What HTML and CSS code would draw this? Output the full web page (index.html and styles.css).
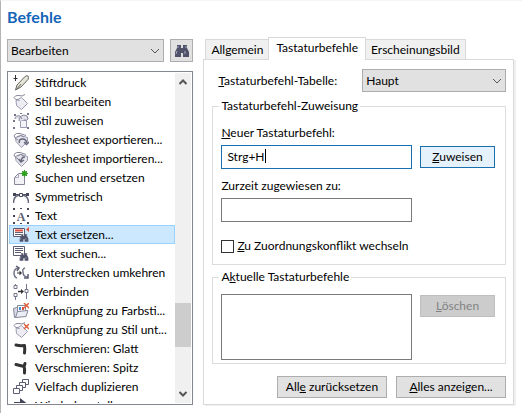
FILE: index.html
```html
<!DOCTYPE html>
<html lang="de">
<head>
    <meta charset="UTF-8">
    <meta name="viewport" content="width=device-width, initial-scale=1.0">
    <title>Befehle</title>
    <link rel="stylesheet" href="styles.css">
</head>
<body>
<h1>Befehle</h1>

<main class="columns">
    <!-- Befehlsliste -->
    <section class="commands">
        <div class="toolbar">
            <div class="dropdown">
                <select id="category" aria-label="Kategorie">
                    <option>Bearbeiten</option>
                </select>
                <svg class="chevron" viewBox="0 0 10 6"><path d="M1 1l4 4 4-4"/></svg>
            </div>
            <button class="search" aria-label="Suchen">
                <svg class="icon" viewBox="0 0 16 16"><use href="#binoculars"/></svg>
            </button>
        </div>

        <div class="list">
            <ul>
                <li>
                    <svg class="icon" viewBox="0 0 16 16"><path d="M2.500 15l1.500-5 7.500-8q2-2 3.500-1t0 3.500L8 12z" fill="#e4e4d8" stroke="#66675f"/><path d="M3 15l5-6" stroke="#66675f"/><path d="M2.500 0v6M0.500 3.500h4" stroke="#333"/></svg>
                    Stiftdruck
                </li>
                <li>
                    <svg class="icon" viewBox="0 0 16 16"><use href="#tag"/></svg>
                    Stil bearbeiten
                </li>
                <li>
                    <svg class="icon" viewBox="0 0 16 16"><path d="M7.500 7.500h6v7h-6z" fill="#f4f4f8" stroke="#9a9bb0"/><path d="M2 6q0-4 5-3l2 3M6 8q0-5 5-6 4 0 4 4-1 2-4 1" fill="#e2e2ec" stroke="#85869a"/><path d="M1 1h2v2H1zM14 0h2v2h-2zM0 14h2v2H0zM14 14h2v2h-2zM0 7h2v2H0zM7 0h2v1H7z" fill="#74768a"/></svg>
                    Stil zuweisen
                </li>
                <li>
                    <svg class="icon" viewBox="0 0 16 16"><use href="#sheet"/><path d="M6.500 11q-1-4 3-4 4 0 4 4M11 10l2.500 2.500L16 10" fill="none" stroke="#65677b" stroke-width="1.500"/></svg>
                    Stylesheet exportieren...
                </li>
                <li>
                    <svg class="icon" viewBox="0 0 16 16"><use href="#sheet"/><path d="M12 6q-4 0-4 5M5.500 8L8 11l3-2" fill="none" stroke="#65677b" stroke-width="1.500"/></svg>
                    Stylesheet importieren...
                </li>
                <li>
                    <svg class="icon" viewBox="0 0 16 16"><path d="M1.500 14.500v-7l4-4h6v11z" fill="#f1f1f6" stroke="#85869a"/><path d="M5.500 3.500v4h-4" fill="none" stroke="#a9abc0"/><circle cx="11.500" cy="3.500" r="2.500" fill="#2f9e1e"/><path d="M11.500 0v7M8 3.500h7M9 1l5 5M14 1L9 6" stroke="#2f9e1e"/></svg>
                    Suchen und ersetzen
                </li>
                <li>
                    <svg class="icon" viewBox="0 0 16 16"><path d="M1 5.500h14" stroke="#44465a"/><path d="M0.500 14q0-8 7.500-8t7.500 8" fill="none" stroke="#65677b" stroke-width="1.500"/><path d="M6.500 4.500h3v3h-3z" fill="#fff" stroke="#44465a"/><path d="M0 4h3v3H0zM13 4h3v3h-3z" fill="#44465a"/></svg>
                    Symmetrisch
                </li>
                <li>
                    <svg class="icon" viewBox="0 0 16 16"><path d="M0 0h2v2H0zM7 0h2v1H7zM14 0h2v2h-2zM0 7h2v2H0zM14 7h2v2h-2zM0 14h2v2H0zM7 15h2v1H7zM14 14h2v2h-2z" fill="#44465a"/><text class="glyph" x="8" y="13">A</text></svg>
                    Text
                </li>
                <li class="selected">
                    <svg class="icon" viewBox="0 0 16 16"><path d="M0.500 1.500h11v8H0.500z" fill="#fff" stroke="#5b5d72"/><path d="M2 3.500h8" stroke="#e0503c" stroke-width="2"/><path d="M2 5.500h8M2 7.500h6" stroke="#5b5d72"/><path d="M16 0v5l-3-2.500z" fill="#e0503c"/><use href="#binoculars" x="6" y="6" width="10" height="10"/></svg>
                    Text ersetzen...
                </li>
                <li>
                    <svg class="icon" viewBox="0 0 16 16"><path d="M0.500 0.500h11v9H0.500z" fill="#fff" stroke="#5b5d72"/><path d="M2 2.500h8M2 4.500h8M2 6.500h6" stroke="#5b5d72"/><use href="#binoculars" x="6" y="6" width="10" height="10"/></svg>
                    Text suchen...
                </li>
                <li>
                    <svg class="icon" viewBox="0 0 16 16"><path d="M5 3Q1 4 1 8q0 4 3 5M12 3Q9 4 10 7q0 5 5 5" fill="none" stroke="#74768a" stroke-width="1.500"/><path d="M3 1l3 2-2 3M15 9v4h-4" fill="none" stroke="#5b5d72" stroke-width="1.500"/><path d="M4 8h4" stroke="#333"/><path d="M6.500 5.500L9 8l-2.500 2.500z" fill="#333"/></svg>
                    Unterstrecken umkehren
                </li>
                <li>
                    <svg class="icon" viewBox="0 0 16 16"><path d="M2.500 0v2M2.500 12v4M13.500 0v6M13.500 9v6" stroke="#74768a"/><path d="M1 1.500h3v3H1zM1 9.500h3v3H1zM12 5.500h3v3h-3z" fill="#fff" stroke="#74768a"/><path d="M5 7.500h4" stroke="#333" stroke-width="1.500"/><path d="M8 5l3 2.500L8 10z" fill="#333"/></svg>
                    Verbinden
                </li>
                <li>
                    <svg class="icon" viewBox="0 0 16 16"><path d="M0.500 5.500l3-1 2 1v8l-4 1z" fill="#d9dbe8" stroke="#85869a"/><path d="M4.500 2.500h8v6h-8z" fill="#fff" stroke="#85869a"/><path d="M6 4h2v3H6z" fill="#3d8fd1"/><path d="M9 4h2v3H9z" fill="#e0503c"/><path d="M2.500 14.500l2-6 10.500-1-2 6z" fill="#eceef6" stroke="#85869a"/><path d="M11 0l5 5M16 0l-5 5" stroke="#e0603c" stroke-width="1.500"/></svg>
                    Verknüpfung zu Farbsti...
                </li>
                <li>
                    <svg class="icon" viewBox="0 0 16 16"><use href="#tag"/><path d="M11 2l5 5M16 2l-5 5" stroke="#e0603c" stroke-width="1.500"/></svg>
                    Verknüpfung zu Stil unt...
                </li>
                <li>
                    <svg class="icon" viewBox="0 0 16 16"><path d="M3 4q4 1 8.500 0.500 0.500 3 0 7.500" fill="none" stroke="#333" stroke-width="3" stroke-linejoin="round" stroke-linecap="round"/></svg>
                    Verschmieren: Glatt
                </li>
                <li>
                    <svg class="icon" viewBox="0 0 16 16"><path d="M3 4.500l8 2 1-3M11 6q1 3 0.500 7" fill="none" stroke="#333" stroke-width="3" stroke-linejoin="round" stroke-linecap="round"/></svg>
                    Verschmieren: Spitz
                </li>
                <li>
                    <svg class="icon" viewBox="0 0 16 16"><g fill="#fff" stroke="#5b5d72"><path d="M9.500 0.500h6v5h-6z"/><path d="M6.500 3.500h6v5h-6z"/><path d="M3.500 6.500h6v5h-6z"/><path d="M0.500 9.500h6v5h-6z"/></g></svg>
                    Vielfach duplizieren
                </li>
                <li>
                    <svg class="icon" viewBox="0 0 16 16"><path d="M1 4h6V0l9 7-9 7v-4H1z" fill="#44465a"/></svg>
                    Wiederherstellen
                </li>
            </ul>
            <div class="scrollbar">
                <button aria-label="Nach oben"><svg viewBox="0 0 10 6"><path d="M1.500 5L5 1.500 8.500 5"/></svg></button>
                <div class="track"><div class="thumb"></div></div>
                <button aria-label="Nach unten"><svg viewBox="0 0 10 6"><path d="M1.500 1L5 4.500 8.500 1"/></svg></button>
            </div>
        </div>
    </section>

    <!-- Registerkarten -->
    <section class="settings">
        <div class="tabs" role="tablist">
            <button role="tab">Allgemein</button>
            <button role="tab" class="active" aria-selected="true">Tastaturbefehle</button>
            <button role="tab">Erscheinungsbild</button>
        </div>

        <div class="panel">
            <div class="table-row">
                <label for="table"><u>T</u>astaturbefehl-Tabelle:</label>
                <div class="dropdown">
                    <select id="table">
                        <option>Haupt</option>
                    </select>
                    <svg class="chevron" viewBox="0 0 10 6"><path d="M1 1l4 4 4-4"/></svg>
                </div>
            </div>

            <fieldset>
                <legend>Tastaturbefehl-Zuweisung</legend>
                <label for="new-key"><u>N</u>euer Tastaturbefehl:</label>
                <div class="field-row">
                    <div class="key-field">
                        <input type="text" id="new-key" class="focused" value="Strg+H">
                        <span class="caret"></span>
                    </div>
                    <button class="primary"><u>Z</u>uweisen</button>
                </div>
                <label for="current">Zurzeit zugewiesen zu:</label>
                <div class="field-row">
                    <input type="text" id="current" readonly>
                </div>
                <div class="check-row">
                    <input type="checkbox" id="conflict">
                    <label for="conflict"><u>Z</u>u Zuordnungskonflikt wechseln</label>
                </div>
            </fieldset>

            <fieldset class="current-keys">
                <legend>A<u>k</u>tuelle Tastaturbefehle</legend>
                <div class="field-row">
                    <select size="4" class="keys" aria-label="Aktuelle Tastaturbefehle"></select>
                    <button disabled><u>L</u>öschen</button>
                </div>
            </fieldset>

            <div class="actions">
                <button>All<u>e</u> zurücksetzen</button>
                <button><u>A</u>lles anzeigen...</button>
            </div>
        </div>
    </section>
</main>

<!-- gemeinsame Symbole -->
<svg class="symbols">
    <symbol id="binoculars" viewBox="0 0 16 16">
        <path d="M3 2h4v3h2V2h4v3l2 4v5H9v-4H7v4H1V9l2-4z" fill="#50526a"/>
        <path d="M4 3v2M12 3v2M3 8l-1 3M11 8v3" stroke="#a9abc0"/>
    </symbol>
    <symbol id="tag" viewBox="0 0 16 16">
        <path d="M3 6.500l5.500-3 6 6-6 6-5-4z" fill="#ececf2" stroke="#9a9bb0"/>
        <path d="M6.500 6.500Q1 5.500 1 3.500 2 1 6 1.500q3 1.500 6-1" fill="none" stroke="#85869a"/>
    </symbol>
    <symbol id="sheet" viewBox="0 0 16 16">
        <path d="M2.500 5.500l5-2 7 2v4l-6 6-5.500-6z" fill="#e6e6ee" stroke="#9a9bb0"/>
        <path d="M5 8Q1 6 1 3.500 3 0.500 7 1.500l6 2M4 5q4-3 7 0" fill="none" stroke="#85869a"/>
    </symbol>
</svg>
</body>
</html>
```
FILE: styles.css
```css
* {
    box-sizing: border-box;
}
body {
    margin: 0;
    padding: 6px 8px 8px 6px;
    border-top: 1px solid #f5f5f5;
    border-left: 1px solid #b4b4b4;
    background-color: white;
    color: black;
    font-family: Lato, "Open Sans", sans-serif;
    font-size: 12px;
    line-height: 16px;
}
button, input, select {
    font: inherit;
    color: inherit;
    margin: 0;
    border-radius: 0;
    appearance: none;
}
h1 {
    margin: 0 0 10px;
    color: #1565b8;
    font-size: 16px;
    line-height: 20px;
}
.columns {
    display: grid;
    grid-template-columns: 3fr 5fr;
    gap: 10px;
}
.icon {
    flex: none;
    width: 16px;
    height: 16px;
    fill: none;
}
.symbols {
    display: none;
}
.glyph {
    font: bold 12px "Liberation Serif", serif;
    text-anchor: middle;
    fill: #5b5d72;
}
/* Auswahlfelder */
.dropdown {
    position: relative;
    flex: 1;
}
.dropdown select {
    display: block;
    width: 100%;
    height: 23px;
    padding: 0 20px 0 3px;
    border: 1px solid #adadad;
    background-color: #e1e1e1;
}
.chevron {
    position: absolute;
    top: 9px;
    right: 4px;
    width: 10px;
    height: 6px;
    fill: none;
    stroke: #555;
    pointer-events: none;
}
/* linke Spalte */
.commands {
    display: flex;
    flex-direction: column;
    gap: 9px;
    padding-top: 2px;
    min-width: 0;
}
.toolbar {
    display: flex;
    gap: 6px;
}
.search {
    display: flex;
    align-items: center;
    justify-content: center;
    width: 23px;
    height: 23px;
    padding: 0;
    border: 1px solid #adadad;
    background-color: #e1e1e1;
}
.list {
    display: flex;
    flex: 1 1 0;
    min-height: 0;
    overflow: hidden;
    padding: 1px;
    border: 1px solid #828790;
}
.list ul {
    flex: 1;
    min-width: 0;
    height: 100%;
    margin: 0;
    padding: 0;
    overflow: hidden;
    list-style: none;
}
.list li {
    display: flex;
    align-items: center;
    gap: 6px;
    height: 19px;
    padding: 0 3px;
    border: 1px solid transparent;
    white-space: nowrap;
}
.list .selected {
    border-color: #99d1ff;
    background-color: #cce8ff;
}
.scrollbar {
    display: flex;
    flex-direction: column;
    width: 16px;
    background-color: #f0f0f0;
}
.scrollbar button {
    display: flex;
    align-items: center;
    justify-content: center;
    height: 18px;
    padding: 0;
    border: none;
    background: none;
}
.scrollbar svg {
    width: 10px;
    height: 6px;
    fill: none;
    stroke: #555;
    stroke-width: 2;
}
.track {
    display: flex;
    flex: 1;
    flex-direction: column;
    justify-content: flex-end;
    padding-bottom: 38px;
}
.thumb {
    height: 44px;
    background-color: #cdcdcd;
}
/* Registerkarten */
.settings {
    min-width: 0;
}
.tabs {
    display: flex;
    align-items: flex-end;
    padding-left: 2px;
}
.tabs button {
    height: 20px;
    padding: 0 5px;
    border: 1px solid #d9d9d9;
    border-bottom: none;
    background-color: #f0f0f0;
    white-space: nowrap;
}
.tabs .active {
    position: relative;
    height: 23px;
    margin: 0 -1px -1px;
    padding: 0 7px 3px;
    background-color: white;
}
.panel {
    padding: 9px 7px 6px 8px;
    border: 1px solid #d9d9d9;
    box-shadow: 2px 1px #f0f0f0;
}
.table-row {
    display: grid;
    grid-template-columns: 1fr 1fr;
    align-items: center;
    margin-bottom: 6px;
    padding-left: 6px;
}
fieldset {
    min-width: 0;
    margin: 0 0 4px;
    padding: 11px 10px 10px 8px;
    border: 1px solid #dcdcdc;
}
legend {
    margin-left: -2px;
    padding: 0 2px;
}
fieldset > label {
    display: block;
    margin-bottom: 4px;
}
.field-row {
    display: grid;
    grid-template-columns: 1fr 75px;
    align-items: start;
    gap: 8px;
    margin-bottom: 9px;
}
.field-row input {
    display: block;
    width: 100%;
    height: 24px;
    padding: 0 5px 2px;
    border: 1px solid #7a7a7a;
    background-color: white;
}
.key-field {
    position: relative;
}
.field-row .focused {
    border-color: #1a6fae;
    outline: none;
}
.caret {
    position: absolute;
    top: 4px;
    left: 44px;
    width: 1px;
    height: 14px;
    background-color: black;
}
.panel button {
    height: 22px;
    padding: 0 4px;
    border: 1px solid #adadad;
    background-color: #e1e1e1;
    line-height: 18px;
}
.field-row button {
    margin-top: 1px;
}
.panel .primary {
    border-color: #1a6fae;
    background-color: #e5f1fb;
}
.panel button:disabled {
    border-color: #bfbfbf;
    background-color: #ccc;
    color: #838383;
}
.check-row {
    display: flex;
    align-items: center;
    gap: 3px;
    margin-top: 16px;
}
.check-row input {
    width: 13px;
    height: 13px;
    border: 1px solid #333;
    background-color: white;
}
.check-row input:checked {
    background-color: #1a6fae;
}
.current-keys {
    padding-top: 9px;
    padding-bottom: 3px;
}
.current-keys .field-row {
    margin-bottom: 0;
}
.keys {
    width: 100%;
    height: 66px;
    border: 1px solid #7a7a7a;
    background-color: white;
}
.actions {
    display: grid;
    grid-template-columns: 110px 110px;
    justify-content: end;
    gap: 9px;
    margin-top: 12px;
}
```
